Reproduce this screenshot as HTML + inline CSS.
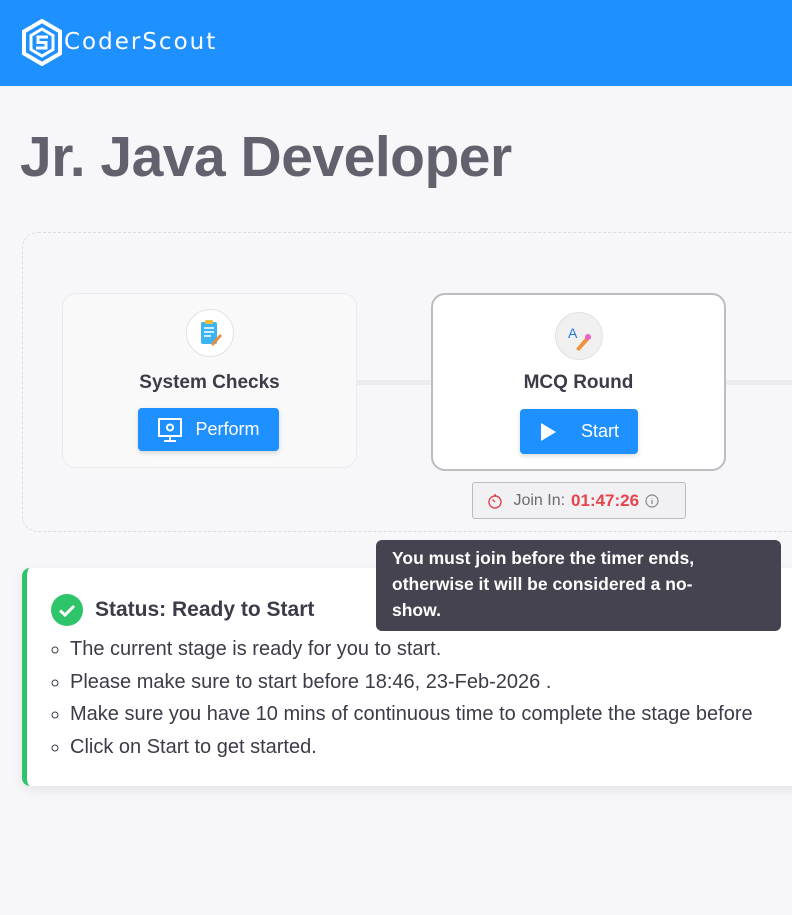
<!DOCTYPE html>
<html><head><meta charset="utf-8"><style>
*{box-sizing:border-box;margin:0;padding:0}
body{width:792px;height:915px;overflow:hidden;background:#f7f7f9;font-family:"Liberation Sans",sans-serif;color:#3c3b47;position:relative}
.hdr{position:absolute;left:0;top:0;width:792px;height:86px;background:#1e90ff}
.logo{position:absolute;left:22px;top:19px}
.brand{position:absolute;left:64px;top:29px;color:#fff;font-size:23px;letter-spacing:2px;font-family:"DejaVu Sans",sans-serif}
h1{position:absolute;left:20px;top:124px;font-size:57px;font-weight:bold;color:#62616d;letter-spacing:-0.5px}
.dash{position:absolute;left:22px;top:232px;width:800px;height:300px;border:1px dashed #dcdce2;border-radius:16px}
.line{position:absolute;height:5px;background:#ececef;top:380px}
.card{position:absolute;background:#f9f9fa;border:1px solid #ebebee;border-radius:14px;text-align:center}
.card2{background:#fff;border:2px solid #bdbdc1}
.ic{position:absolute;width:48px;height:48px;border-radius:50%;background:#fff;border:1px solid #e2e2e5;left:50%;margin-left:-24px;top:15px}
.ct{position:absolute;width:100%;top:78px;font-size:19px;font-weight:bold;color:#3c3b47}
.btn{position:absolute;background:#1e90ff;color:#fff;font-size:18px;border-radius:4px;box-shadow:0 2px 5px rgba(0,0,0,.15);display:flex;align-items:center;justify-content:center;gap:12px}
.join{position:absolute;left:472px;top:482px;width:214px;height:37px;border:1px solid #bcbcc0;border-radius:3px;background:#f1f1f3;font-size:16px;color:#6a6a72;display:flex;align-items:center;padding-left:14px;gap:6px}
.tip{position:absolute;z-index:5;left:376px;top:540px;width:405px;height:91px;background:#45434f;border-radius:6px;color:#fff;font-size:17.5px;font-weight:bold;line-height:26px;padding:5px 50px 5px 16px}
.st{position:absolute;left:22px;top:568px;width:800px;height:218px;background:#fff;border-left:5px solid #2ec46a;border-radius:8px;box-shadow:0 4px 12px rgba(0,0,0,.08)}
.sh{position:absolute;left:24px;top:26px;display:flex;align-items:center;gap:12px;font-size:21px;font-weight:bold}
.st ul{position:absolute;left:43px;top:65px;list-style:circle;font-size:20px;line-height:32.7px;white-space:nowrap}
</style></head><body>
<div class="hdr">
<svg class="logo" width="40" height="47" viewBox="0 0 40 47"><path d="M20 2 L38 12.5 V34.5 L20 45 L2 34.5 V12.5Z" fill="none" stroke="#fff" stroke-width="4"/><path d="M20 10 L31 16.5 V30.5 L20 37 L9 30.5 V16.5Z" fill="none" stroke="#fff" stroke-width="3"/><path d="M26 18 H16 V23.5 H24 V29 H14" fill="none" stroke="#fff" stroke-width="3"/></svg>
<div class="brand">CoderScout</div></div>
<h1>Jr. Java Developer</h1>
<div class="dash"></div>
<div class="line" style="left:357px;width:74px"></div>
<div class="line" style="left:726px;width:70px"></div>
<div class="card" style="left:62px;top:293px;width:295px;height:175px">
<div class="ic"><svg width="48" height="48" viewBox="0 0 48 48"><rect x="14" y="12" width="16" height="22" rx="2" fill="#3cb4f0"/><rect x="18" y="10" width="8" height="4" rx="1" fill="#f5b83a"/><path d="M17 18h10M17 22h10M17 26h7" stroke="#fff" stroke-width="1.5"/><path d="M24 34 L33 24 L35 26 L26 36Z" fill="#f08a3a"/></svg></div>
<div class="ct">System Checks</div>
<div class="btn" style="left:75px;top:114px;width:141px;height:43px"><svg width="26" height="26" viewBox="0 0 26 26" fill="none" stroke="#fff" stroke-width="2"><rect x="2" y="2" width="22" height="17"/><path d="M13 19v4M7 24h12"/><circle cx="13" cy="10.5" r="3"/></svg>Perform</div>
</div>
<div class="card card2" style="left:431px;top:293px;width:295px;height:178px">
<div class="ic" style="background:#f0f0f1;top:17px"><svg width="48" height="48" viewBox="0 0 48 48"><text x="12" y="25" font-size="14" fill="#1e7ae0" font-family="Liberation Sans">A</text><path d="M20 36 L30 24 L33 27 L23 38Z" fill="#f0923a"/><circle cx="32" cy="24" r="3" fill="#e863c8"/></svg></div>
<div class="ct" style="top:77px">MCQ Round</div>
<div class="btn" style="left:87px;top:114px;width:118px;height:45px;gap:24px"><svg width="18" height="20" viewBox="0 0 18 20"><path d="M2 1 L17 10 L2 19Z" fill="#fff"/></svg>Start</div>
</div>
<div class="join"><svg width="16" height="16" viewBox="0 0 16 16" fill="none" stroke="#e0454f" stroke-width="1.4"><circle cx="8" cy="9" r="6"/><path d="M8 9 L5.5 6.5M7 2h2"/></svg>&nbsp;Join In:<b style="color:#e8444e;font-size:17px">01:47:26</b><svg width="14" height="14" viewBox="0 0 14 14" fill="none" stroke="#888" stroke-width="1.2"><circle cx="7" cy="7" r="6"/><path d="M7 6v4M7 4v.5"/></svg></div>
<div class="tip">You must join before the timer ends, otherwise it will be considered a no-show.</div>
<div class="st">
<div class="sh"><svg width="32" height="32" viewBox="0 0 32 32"><circle cx="16" cy="16" r="16" fill="#2ec46a"/><path d="M9 16.5 L14 21 L23 12" stroke="#fff" stroke-width="3" fill="none"/></svg>Status: Ready to Start</div>
<ul><li>The current stage is ready for you to start.</li><li>Please make sure to start before 18:46, 23-Feb-2026 .</li><li>Make sure you have 10 mins of continuous time to complete the stage before</li><li>Click on Start to get started.</li></ul>
</div>
</body></html>
